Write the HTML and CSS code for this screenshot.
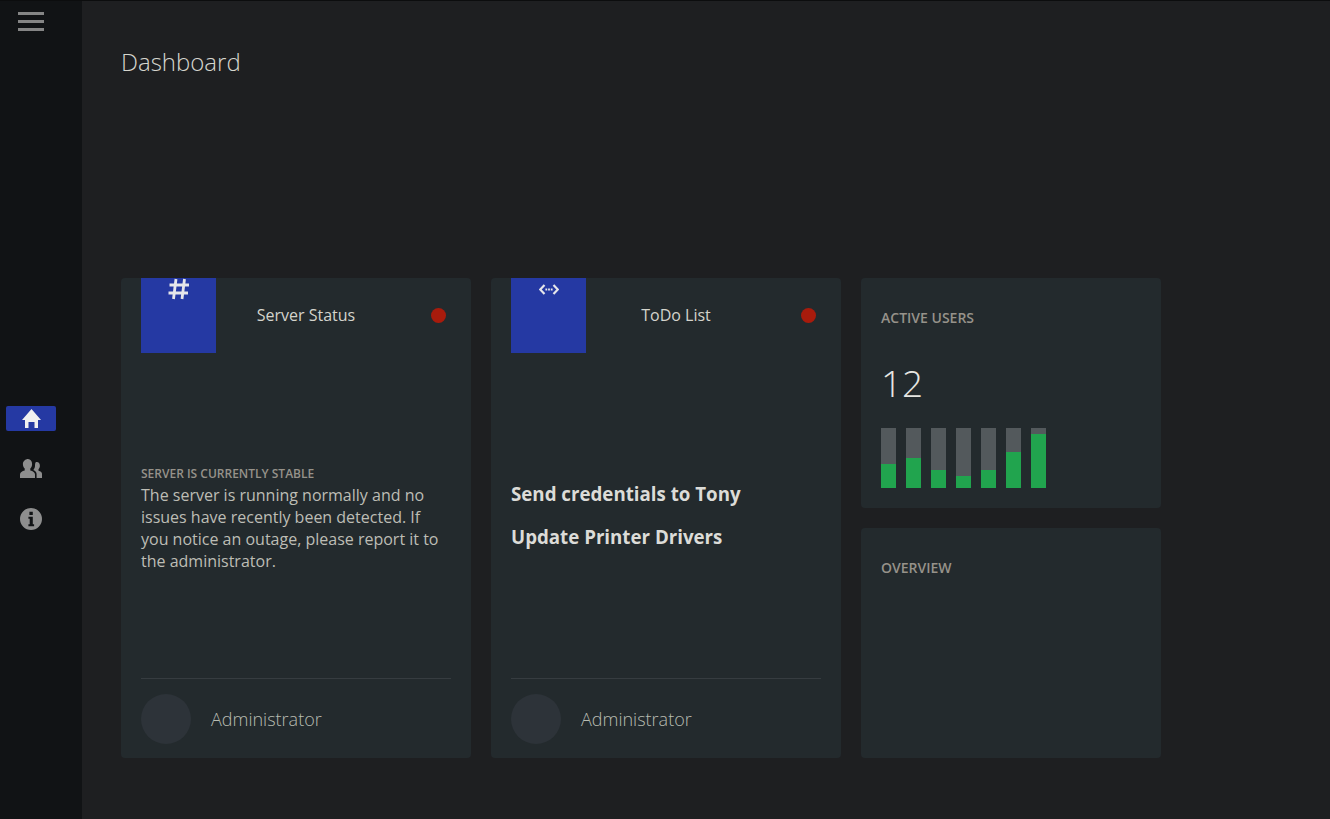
FILE: index.html
```html
<!DOCTYPE html>
<html lang="en">
<head>
<meta charset="utf-8">
<title>Dashboard</title>
<link rel="stylesheet" href="styles.css">
</head>
<body>
<div class="app">
  <aside class="sidebar">
    <button class="menu" aria-label="Menu"><span></span><span></span><span></span></button>
    <nav class="nav">
      <a class="nav-item active"><svg width="19" height="19" viewBox="0 0 19 19"><path fill="currentColor" d="M9.500 0 L19 11 H16 V19 H12.500 V13 H6.500 V19 H3 V11 H0 Z"/></svg></a>
      <a class="nav-item"><svg width="22" height="19" viewBox="0 0 22 19"><path fill="currentColor" d="M8 0c2.500 0 4.100 2.200 4.100 5 0 2-.8 3.700-1.800 4.600v1.800c2.500.7 4.700 1.900 4.700 4V19H0v-3.600c0-2.100 2.200-3.300 4.700-4V9.600C3.700 8.700 2.900 7 2.900 5 2.900 2.200 5.500 0 8 0z"/><path fill="currentColor" d="M16.800 3c1.900 0 3.100 1.700 3.100 3.800 0 1.500-.6 2.800-1.400 3.500v1.500c1.900.5 3.500 1.400 3.500 3V19h-5.400v-4c0-1.800-1.300-3-3-3.700v-.9c.9-.9 1.400-2.500 1.400-4C15.300 5 14.900 3 16.800 3z"/></svg></a>
      <a class="nav-item"><svg width="22" height="22" viewBox="0 0 22 22"><path fill="currentColor" fill-rule="evenodd" d="M11 0a11 11 0 1 1 0 22a11 11 0 0 1 0-22zM9.400 3.700h3.400v3.200H9.400zM8.400 8.800h4.400v7.400h1.300v2H8.400v-2h1.300v-5.400H8.400z"/></svg></a>
    </nav>
  </aside>
  <main class="main">
    <h1 class="page-title">Dashboard</h1>
    <section class="grid">
      <article class="card task">
        <header class="task-head">
          <div class="icon-box hash"><svg width="22" height="22" viewBox="0 0 22 22"><path fill="none" stroke="currentColor" stroke-width="2.800" d="M8 1 L5.500 21 M16.500 1 L14 21 M1.500 7 H21 M0.500 15 H20"/></svg></div>
          <div class="task-title">Server Status</div>
          <span class="dot"></span>
        </header>
        <div class="task-body status-body">
          <h3 class="status-label">SERVER IS CURRENTLY STABLE</h3>
          <p class="status-text">The server is running normally and no issues have recently been detected. If you notice an outage, please report it to the administrator.</p>
        </div>
        <footer class="task-foot"><span class="avatar"></span><span class="owner">Administrator</span></footer>
      </article>
      <article class="card task">
        <header class="task-head">
          <div class="icon-box code"><svg width="20" height="11" viewBox="0 0 20 11"><path fill="none" stroke="currentColor" stroke-width="2.200" d="M5.500 1 L1.200 5.500 L5.500 10 M14.500 1 L18.800 5.500 L14.500 10"/><path fill="currentColor" d="M6.400 4.500h1.800v2H6.400zM9.100 4.500h1.800v2H9.100zM11.800 4.500h1.800v2h-1.800z"/></svg></div>
          <div class="task-title">ToDo List</div>
          <span class="dot"></span>
        </header>
        <div class="task-body todo-body">
          <p class="todo">Send credentials to Tony</p>
          <p class="todo">Update Printer Drivers</p>
        </div>
        <footer class="task-foot"><span class="avatar"></span><span class="owner">Administrator</span></footer>
      </article>
      <div class="side">
        <article class="card stat">
          <h3 class="stat-label">ACTIVE USERS</h3>
          <div class="stat-value">12</div>
          <div class="bars">
            <div class="bar"><div class="fill" style="height:40%"></div></div>
            <div class="bar"><div class="fill" style="height:50%"></div></div>
            <div class="bar"><div class="fill" style="height:30%"></div></div>
            <div class="bar"><div class="fill" style="height:20%"></div></div>
            <div class="bar"><div class="fill" style="height:30%"></div></div>
            <div class="bar"><div class="fill" style="height:60%"></div></div>
            <div class="bar"><div class="fill" style="height:90%"></div></div>
          </div>
        </article>
        <article class="card stat">
          <h3 class="stat-label">OVERVIEW</h3>
        </article>
      </div>
    </section>
  </main>
</div>
</body>
</html>
```
FILE: styles.css
```css
* { box-sizing: border-box; }
html, body { height: 100%; margin: 0; }
body {
  background: #1e1f21;
  border-top: 1px solid #0c0d0e;
  font-family: "Open Sans", sans-serif;
  color: #c8c8c0;
  overflow: hidden;
}
.app { display: flex; height: 100%; }
.sidebar {
  width: 82px;
  flex: none;
  background: #111315;
  padding: 11px 0 0 6px;
}
.menu {
  display: flex;
  flex-direction: column;
  gap: 5px;
  width: 26px;
  margin-left: 12px;
  padding: 0;
  background: none;
  border: 0;
}
.menu span { display: block; height: 3px; width: 26px; background: #858585; }
.nav { display: flex; flex-direction: column; margin-top: 375px; }
.nav-item {
  width: 50px;
  height: 25px;
  margin-bottom: 25px;
  display: flex;
  align-items: center;
  justify-content: center;
  color: #8e8e8e;
  border-radius: 2px;
}
.nav-item.active { background: #2539a3; color: #f0f0f0; }
.main { flex: 1; padding: 0 39px; }
.page-title {
  margin: 0;
  padding-top: 44px;
  height: 277px;
  font-size: 24px;
  line-height: 33px;
  font-weight: 300;
  color: #d6d6ce;
}
.grid { display: flex; gap: 20px; height: 480px; }
.card { background: #232a2d; border-radius: 4px; }
.task { width: 350px; display: flex; flex-direction: column; padding: 0 20px; }
.task-head { display: flex; align-items: center; height: 75px; flex: none; }
.icon-box {
  width: 75px;
  height: 75px;
  flex: none;
  background: #2539a3;
  color: #e6e6ea;
  display: flex;
  justify-content: center;
  align-items: flex-start;
}
.icon-box.hash { padding-top: 0; }
.icon-box.code { padding-top: 6px; }
.icon-box svg { display: block; }
.task-title { width: 180px; text-align: center; font-size: 16px; line-height: 20px; padding-bottom: 2px; color: #d4d4cc; }
.dot { width: 15px; height: 15px; border-radius: 50%; background: #a81b0c; margin-left: auto; margin-right: 5px; }
.task-body { flex: 1; }
.status-body { padding-top: 113px; }
.status-label { margin: 0 0 2px; font-size: 12px; line-height: 16px; font-weight: 600; color: #96928a; }
.status-text { margin: 0; font-size: 16px; line-height: 22px; color: #bdbdb5; }
.todo-body { padding-top: 129px; }
.todo { margin: 0 0 19px; font-size: 18.72px; line-height: 24px; font-weight: 700; color: #dcdcd8; }
.task-foot {
  height: 80px;
  flex: none;
  border-top: 1px solid #363c40;
  display: flex;
  align-items: flex-start;
  padding-top: 15px;
}
.avatar { width: 50px; height: 50px; border-radius: 50%; background: #2d3339; flex: none; }
.owner { margin-left: 20px; font-size: 18px; line-height: 50px; font-weight: 300; color: #b8bcb2; }
.side { width: 300px; display: flex; flex-direction: column; gap: 20px; }
.stat { height: 230px; padding: 30px 20px 0; }
.stat-label { margin: 0; font-size: 14px; line-height: 20px; font-weight: 600; color: #96928a; }
.stat-value { margin-top: 29px; font-size: 37px; line-height: 51px; font-weight: 300; color: #e6e6e2; }
.bars { display: flex; gap: 10px; height: 60px; margin-top: 20px; }
.bar { width: 15px; height: 60px; background: #53595c; display: flex; align-items: flex-end; }
.fill { width: 100%; background: #21a44e; }
```
